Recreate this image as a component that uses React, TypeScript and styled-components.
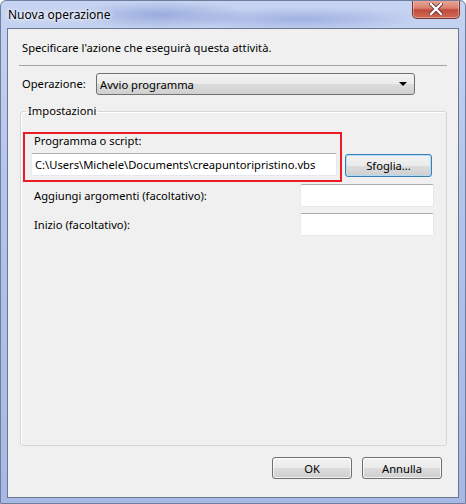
import styled, { createGlobalStyle } from 'styled-components'

const GlobalStyle = createGlobalStyle`
  html, body {
    margin: 0;
    padding: 0;
    background: #ffffff;
  }
  * {
    box-sizing: border-box;
  }
`

const Window = styled.div`
  width: 466px;
  height: 504px;
  display: flex;
  flex-direction: column;
  border-radius: 6px 6px 0 0;
  border: 1px solid #6f7e9e;
  background:
    radial-gradient(ellipse 90px 14px at 160px 14px, rgba(120, 140, 205, 0.55), transparent),
    radial-gradient(ellipse 120px 12px at 300px 18px, rgba(125, 145, 210, 0.5), transparent),
    linear-gradient(180deg, #c6d3f1 0%, #b3c3ea 40%, #a7b8e4 100%);
  font-family: 'Noto Sans', 'Open Sans', sans-serif;
  font-size: 11.2px;
  color: #000;
  overflow: hidden;
`

const TitleBar = styled.div`
  height: 27px;
  display: flex;
  align-items: flex-start;
  justify-content: space-between;
  padding-left: 7px;
`

const Title = styled.div`
  margin-top: 6px;
  font-size: 12px;
  line-height: 16px;
  color: #000;
  text-shadow: 0 0 6px #ffffff, 0 0 3px #ffffff;
`

const CloseButton = styled.div`
  width: 48px;
  height: 19px;
  margin-right: 5px;
  margin-top: -1px;
  display: flex;
  align-items: center;
  justify-content: center;
  border: 1px solid #7a3531;
  border-top: none;
  border-radius: 0 0 5px 5px;
  background: linear-gradient(180deg, #e9a899 0%, #d8806f 45%, #c24a3c 55%, #cf6a55 100%);
  box-shadow: inset 0 0 0 1px rgba(255, 255, 255, 0.35);
`

const Client = styled.div`
  flex: 1;
  margin: 0 6px 5px 6px;
  display: flex;
  flex-direction: column;
  border: 1px solid #6b7790;
  background: #f0f0f0;
`

const Intro = styled.div`
  padding: 11px 14px 0;
  line-height: 16px;
`

const Separator = styled.div`
  margin: 9px 0 0 11px;
  width: 428px;
  height: 1px;
  background: #a9a3a3;
`

const OperationRow = styled.div`
  margin-top: 7px;
  padding-left: 14px;
  display: flex;
  align-items: center;
  height: 22px;
`

const RowLabel = styled.span`
  width: 74px;
  line-height: 16px;
`

const Combo = styled.div`
  width: 319px;
  height: 22px;
  display: flex;
  align-items: center;
  justify-content: space-between;
  padding: 0 6px 0 3px;
  border: 1px solid #707070;
  border-radius: 3px;
  background: linear-gradient(180deg, #f2f2f2 0%, #ebebeb 50%, #dddddd 51%, #cfcfcf 100%);
`

const ComboArrow = styled.span`
  width: 0;
  height: 0;
  border-left: 4px solid transparent;
  border-right: 4px solid transparent;
  border-top: 4px solid #000;
  margin-right: 1px;
`

const GroupBox = styled.fieldset`
  flex: 1;
  min-height: 0;
  margin: 8px 0 0 12px;
  width: 427px;
  padding: 0 0 0 2px;
  border: 1px solid #d0d7dd;
  border-radius: 3px;
  box-shadow: inset 1px 1px 0 #ffffff;
`

const Legend = styled.legend`
  margin-left: 3px;
  padding: 0 2px;
  line-height: 16px;
`

const PathRow = styled.div`
  margin-top: 13px;
  display: flex;
  align-items: flex-end;
`

const Highlight = styled.div`
  width: 319px;
  height: 50px;
  display: flex;
  flex-direction: column;
  padding: 0 3px 4px 6px;
  border: 2px solid #ec1c24;
`

const FieldLabel = styled.div`
  padding-left: 3px;
  line-height: 14px;
  height: 14px;
`

const TextBox = styled.div<{ $width: number }>`
  width: ${(p) => p.$width}px;
  height: 23px;
  display: flex;
  align-items: center;
  padding-left: 3px;
  background: #ffffff;
  border: 1px solid #e3e9ef;
  border-top-color: #abadb3;
  border-radius: 2px;
  white-space: nowrap;
  overflow: hidden;
`

const PathBox = styled(TextBox)`
  margin-top: 5px;
`

const Button = styled.div<{ $focused?: boolean }>`
  width: 80px;
  height: 22px;
  display: flex;
  align-items: center;
  justify-content: center;
  border: 1px solid ${(p) => (p.$focused ? '#3c7fb1' : '#707070')};
  border-radius: 3px;
  background: linear-gradient(180deg, #f2f2f2 0%, #ebebeb 50%, #dddddd 51%, #cfcfcf 100%);
  box-shadow: inset 0 0 0 1px
    ${(p) => (p.$focused ? 'rgba(170, 220, 250, 0.9)' : 'rgba(255, 255, 255, 0.7)')};
`

const BrowseButton = styled(Button)`
  width: 87px;
  height: 23px;
  margin: 0 0 5px 3px;
`

const OptionRow = styled.div<{ $gap: number }>`
  margin-top: ${(p) => p.$gap}px;
  display: flex;
  align-items: center;
  justify-content: space-between;
  padding: 0 12px 0 11px;
  line-height: 16px;
`

const Footer = styled.div`
  margin: 11px 0 18px;
  padding-right: 16px;
  display: flex;
  justify-content: flex-end;
  gap: 10px;
`

export default function App() {
  return (
    <>
      <GlobalStyle />
      <Window>
        <TitleBar>
          <Title>Nuova operazione</Title>
          <CloseButton>
            <svg width="14" height="12" viewBox="0 0 14 12">
              <path d="M2 1 L12 11 M12 1 L2 11" stroke="#5a2a28" strokeWidth="4" strokeLinecap="square" />
              <path d="M2 1 L12 11 M12 1 L2 11" stroke="#ffffff" strokeWidth="2.4" strokeLinecap="square" />
            </svg>
          </CloseButton>
        </TitleBar>
        <Client>
          <Intro>Specificare l'azione che eseguirà questa attività.</Intro>
          <Separator />
          <OperationRow>
            <RowLabel>Operazione:</RowLabel>
            <Combo>
              <span>Avvio programma</span>
              <ComboArrow />
            </Combo>
          </OperationRow>
          <GroupBox>
            <Legend>Impostazioni</Legend>
            <PathRow>
              <Highlight>
                <FieldLabel>Programma o script:</FieldLabel>
                <PathBox $width={306}>C:\Users\Michele\Documents\creapuntoripristino.vbs</PathBox>
              </Highlight>
              <BrowseButton $focused>Sfoglia...</BrowseButton>
            </PathRow>
            <OptionRow $gap={2}>
              <span>Aggiungi argomenti (facoltativo):</span>
              <TextBox $width={134} />
            </OptionRow>
            <OptionRow $gap={6}>
              <span>Inizio (facoltativo):</span>
              <TextBox $width={134} />
            </OptionRow>
          </GroupBox>
          <Footer>
            <Button>OK</Button>
            <Button>Annulla</Button>
          </Footer>
        </Client>
      </Window>
    </>
  )
}
